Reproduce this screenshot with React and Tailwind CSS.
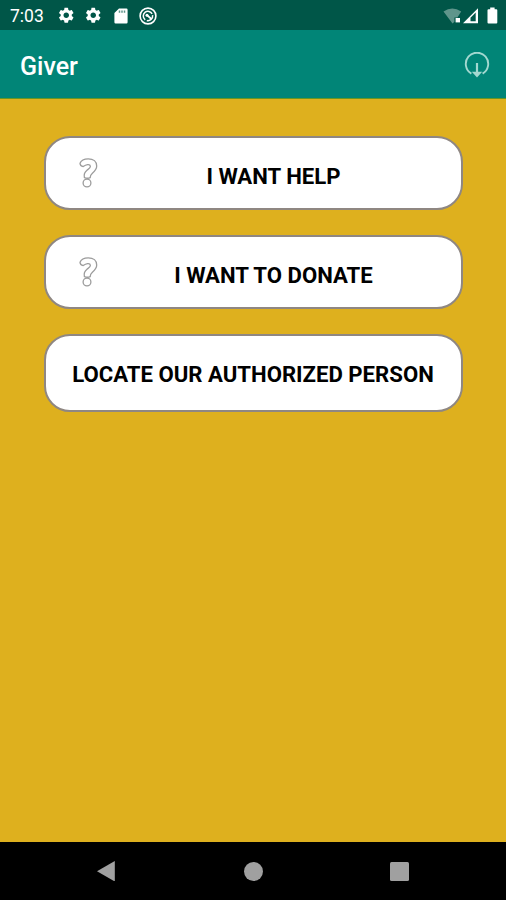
import { MdSettings } from "react-icons/md";

function SdCardIcon() {
  return (
    <svg className="h-4 w-[14px]" viewBox="0 0 14 16" fill="none">
      <path
        d="M5 0.5h7.4a1.2 1.2 0 0 1 1.2 1.2v12.6a1.2 1.2 0 0 1-1.2 1.2H1.6a1.2 1.2 0 0 1-1.2-1.2V5z"
        fill="#fff"
      />
      <path d="M5.5 2.5v2.2M8 2.5v2.2M10.5 2.5v2.2" stroke="#5f958b" strokeWidth="1.5" />
    </svg>
  );
}

function SyncCircleIcon() {
  return (
    <svg className="size-[18px]" viewBox="0 0 18 18" fill="none" stroke="#fff">
      <circle cx="9" cy="9" r="7.9" strokeWidth="1.6" />
      <path d="M6.2 12.8a4.7 4.7 0 0 1 0-7.6 4.7 4.7 0 0 1 6.9 1.6" strokeWidth="1.5" />
      <path d="M13.6 8.2a4.7 4.7 0 0 1-5.8 5.3" strokeWidth="1.5" />
      <path d="M7.4 7.6l5 4.4" strokeWidth="1.8" />
      <circle cx="8" cy="8.2" r="1.5" fill="#fff" stroke="none" />
    </svg>
  );
}

function StatusBar() {
  return (
    <div className="flex h-[30px] shrink-0 items-center bg-[#005648] pt-px pr-2 pl-[10px] text-white">
      <span className="w-[47px] pt-[2px] text-[17.5px] leading-none">7:03</span>
      <MdSettings className="size-[18.5px]" />
      <MdSettings className="mr-[11px] ml-[8.5px] size-[18.5px]" />
      <SdCardIcon />
      <div className="ml-[11px]">
        <SyncCircleIcon />
      </div>
      <svg className="ml-auto h-4 w-[19px]" viewBox="0 0 19 16">
        <path d="M0.5 3.5Q9.3-2.5 18.2 3.5L14.4 9.4H11.4V13.7L9.5 15.5z" fill="#5f958b" />
        <path d="M12.6 10h4.4v4.4h-4.4z" fill="#fff" />
      </svg>
      <svg className="ml-px h-4 w-4" viewBox="0 0 16 16">
        <path d="M0 15.3L15 0.3V15.3z" fill="#fff" />
        <path d="M7.5 9.7L12.7 4.6V13.2H7.5z" fill="#005648" />
      </svg>
      <svg className="ml-2 h-[17px] w-[11px]" viewBox="0 0 11 17">
        <path
          d="M3.2 0.5h4.4v1.7h1.7a1 1 0 0 1 1 1v12.2a1 1 0 0 1-1 1H1.5a1 1 0 0 1-1-1V3.2a1 1 0 0 1 1-1h1.7z"
          fill="#fff"
        />
      </svg>
    </div>
  );
}

function AppBar() {
  return (
    <header className="flex h-[69px] shrink-0 items-center justify-between border-b border-[#679522] bg-[#018577] pt-px pr-4 pl-5">
      <h1 className="pt-[3px] text-[25px] leading-none font-medium text-white">Giver</h1>
      <svg className="size-[26px]" viewBox="0 0 26 26" fill="none" stroke="#a3d8d0">
        <path d="M7.4 21.6A11.2 11.2 0 1 1 18.6 21.6" strokeWidth="1.9" />
        <path d="M13 11v10" strokeWidth="2.2" />
        <path d="M7.8 19.8h10.4L13 25.5z" fill="#a3d8d0" stroke="none" />
      </svg>
    </header>
  );
}

function QuestionIcon() {
  return (
    <svg
      className="h-[30px] w-[19px] shrink-0 -translate-y-[3px]"
      viewBox="0 0 19 30"
      fill="none"
      stroke="#9c9c9c"
      strokeWidth="1.3"
    >
      <path d="M1 5.2C2.2 2.2 5.3 0.9 9.2 0.9C14.5 0.9 17.7 3.7 17.7 8C17.7 11.1 16 13 13.4 15.2C11.6 16.8 11.2 17.6 11.2 19.6C9.5 20.4 7.4 20.4 5.4 19.6C4.6 16.1 5.4 14.2 8 12.2C10.4 10.4 11.6 9.7 11.4 8.4C11.2 7 10.2 6.4 8.6 6.6C7 6.8 5.5 7.6 4.2 8.6C2.6 8.3 1.1 7 1 5.2z" />
      <circle cx="8" cy="25" r="3.9" />
    </svg>
  );
}

function MenuButton({ label, icon, className }) {
  return (
    <button
      type="button"
      className={`flex w-full items-center rounded-[26px] border-2 border-[#8f8782] bg-white text-[22.15px] leading-none font-bold text-black ${className}`}
    >
      {icon && <QuestionIcon />}
      <span className="flex-1 text-center whitespace-nowrap">{label}</span>
    </button>
  );
}

function NavBar() {
  return (
    <nav className="flex h-[58px] shrink-0 items-center bg-black pl-[96px]">
      <svg className="h-5 w-[19px]" viewBox="0 0 19 20">
        <path d="M18.8 0v20.5L1 10.2z" fill="#a0a0a0" />
      </svg>
      <div className="ml-[129px] size-[19px] rounded-full bg-[#a0a0a0]" />
      <div className="ml-[127px] size-[19px] rounded-[1.5px] bg-[#a0a0a0]" />
    </nav>
  );
}

export default function App() {
  return (
    <div className="flex h-[900px] w-[506px] flex-col overflow-hidden bg-[#deb01e] font-['Roboto',sans-serif]">
      <StatusBar />
      <AppBar />
      <main className="flex flex-1 flex-col gap-[25px] px-[43.5px] pt-[37px]">
        <MenuButton label="I WANT HELP" icon className="h-[74px] pt-[6px] pr-[11px] pl-[33px]" />
        <MenuButton label="I WANT TO DONATE" icon className="h-[74px] pt-[6px] pr-[11px] pl-[33px]" />
        <MenuButton label="LOCATE OUR AUTHORIZED PERSON" className="h-[78px] pt-[2px]" />
      </main>
      <NavBar />
    </div>
  );
}
